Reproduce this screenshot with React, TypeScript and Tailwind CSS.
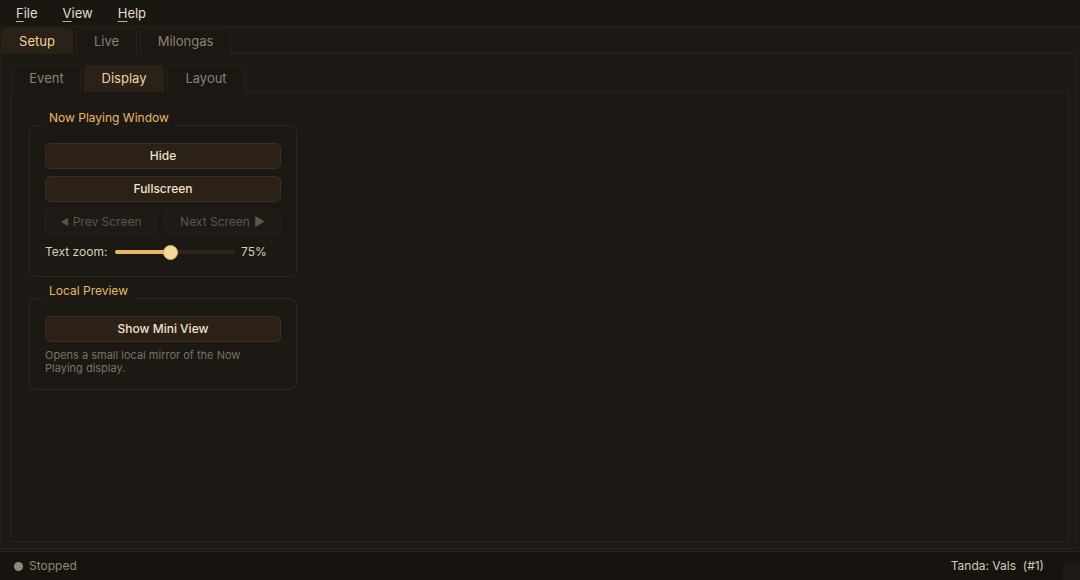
import * as React from "react";

const font = { fontFamily: "Inter, 'Noto Sans', sans-serif" };

function MenuItem({ label }: { label: string }) {
  return (
    <span className="text-[13px] text-[#e6dccd]">
      <span className="underline underline-offset-[3px] decoration-[#bdb3a4]">{label[0]}</span>
      {label.slice(1)}
    </span>
  );
}

function Tab({ label, active, w }: { label: string; active?: boolean; w: string }) {
  return (
    <div
      className={
        "flex h-full items-center justify-center rounded-t-[5px] border border-b-0 text-[13px] " +
        w +
        (active
          ? " border-[#2a231b] bg-[#2a2119] text-[#f0d49a]"
          : " border-[#28221b] bg-[#1b1713] text-[#8a8175]")
      }
    >
      {label}
    </div>
  );
}

function Btn({ children }: { children: React.ReactNode }) {
  return (
    <button className="flex h-[26px] w-full items-center justify-center rounded-[5px] border border-[#3b2f21] bg-[#2b2117] text-[12px] font-medium text-[#f1e3cc]">
      {children}
    </button>
  );
}

function DisabledBtn({ children, w }: { children: React.ReactNode; w: string }) {
  return (
    <button
      className={
        "flex h-[26px] items-center justify-center gap-1 rounded-[5px] border border-[#25201a] bg-[#1e1a16] text-[12px] text-[#5e564c] " +
        w
      }
    >
      {children}
    </button>
  );
}

function Group({ title, children }: { title: string; children: React.ReactNode }) {
  return (
    <div className="relative w-[268px] rounded-[7px] border border-[#2e281f] px-[15px] pb-[14px] pt-[17px]">
      <span className="absolute -top-[15px] left-[13px] bg-[#1c1814] px-[6px] pb-[6px] text-[12px] leading-[14px] text-[#e6b96a]">
        {title}
      </span>
      {children}
    </div>
  );
}

export default function App() {
  return (
    <div style={font} className="flex h-[580px] w-[1080px] flex-col overflow-hidden bg-[#1c1814]">
      {/* menu bar */}
      <div className="flex h-[27px] shrink-0 items-center gap-[25px] border-b border-[#28221b] bg-[#1a1612] pl-[16px] pt-[1px]">
        <MenuItem label="File" />
        <MenuItem label="View" />
        <MenuItem label="Help" />
      </div>

      {/* top tabs */}
      <div className="flex h-[27px] shrink-0 items-end pt-[1px]">
        <div className="flex h-full items-end gap-[3px] pl-[1px]">
          <Tab label="Setup" active w="w-[72px]" />
          <Tab label="Live" w="w-[61px]" />
          <Tab label="Milongas" w="w-[91px]" />
        </div>
        <div className="mr-[4px] h-full flex-1 border-b border-[#2e2419]" />
      </div>

      {/* outer pane */}
      <div className="mr-[4px] flex flex-1 flex-col border-x border-b border-[#28221b] pb-[6px] pl-[9px] pr-[6px] pt-[11px]">
        <div className="flex h-[27px] shrink-0 items-end">
          <div className="flex h-full items-end gap-[3px] pl-[2px]">
            <Tab label="Event" w="w-[69px]" />
            <Tab label="Display" active w="w-[80px]" />
            <Tab label="Layout" w="w-[78px]" />
          </div>
          <div className="h-full flex-1 border-b border-[#2a241c]" />
        </div>
        <div className="flex flex-1 flex-col gap-[21px] border-x border-b border-[#2a241c] pl-[18px] pt-[33px]">
          <Group title="Now Playing Window">
            <div className="flex flex-col gap-[7px]">
              <Btn>Hide</Btn>
              <Btn>Fullscreen</Btn>
              <div className="flex gap-[7px]">
                <DisabledBtn w="w-[112px]">
                  <span className="text-[9px]">◀</span> Prev Screen
                </DisabledBtn>
                <DisabledBtn w="w-[117px]">
                  Next Screen <span className="text-[12px]">▶</span>
                </DisabledBtn>
              </div>
              <div className="flex h-[20px] items-center text-[12px] text-[#d8cdbd]">
                <span className="w-[70px]">Text zoom:</span>
                <div className="relative flex h-[20px] w-[120px] items-center">
                  <div className="h-[4px] w-full rounded-full bg-[#2e261d]" />
                  <div className="absolute left-0 h-[4px] w-[56px] rounded-full bg-[#e6b866]" />
                  <div className="absolute left-[48px] h-[15px] w-[15px] rounded-full border border-[#e0b060] bg-[#f5d79f]" />
                </div>
                <span className="ml-[6px]">75%</span>
              </div>
            </div>
          </Group>
          <Group title="Local Preview">
            <Btn>Show Mini View</Btn>
            <p className="mt-[7px] w-[230px] text-[11px] leading-[13px] text-[#7b7266]">
              Opens a small local mirror of the Now Playing display.
            </p>
          </Group>
        </div>
      </div>

      {/* status bar */}
      <div className="mt-[2px] flex h-[29px] shrink-0 items-center border-t border-[#2a231a] bg-[#171410] pl-[14px] text-[12px]">
        <span className="mr-[6px] h-[9px] w-[9px] rounded-full bg-[#8f877a]" />
        <span className="text-[#8f877a]">Stopped</span>
        <span className="ml-auto mr-[19px] text-[#d3c9ba]">Tanda: Vals&nbsp;&nbsp;(#1)</span>
        <div className="mt-[11px] h-[18px] w-[17px] self-start bg-[#1d1a16]" />
      </div>
    </div>
  );
}
